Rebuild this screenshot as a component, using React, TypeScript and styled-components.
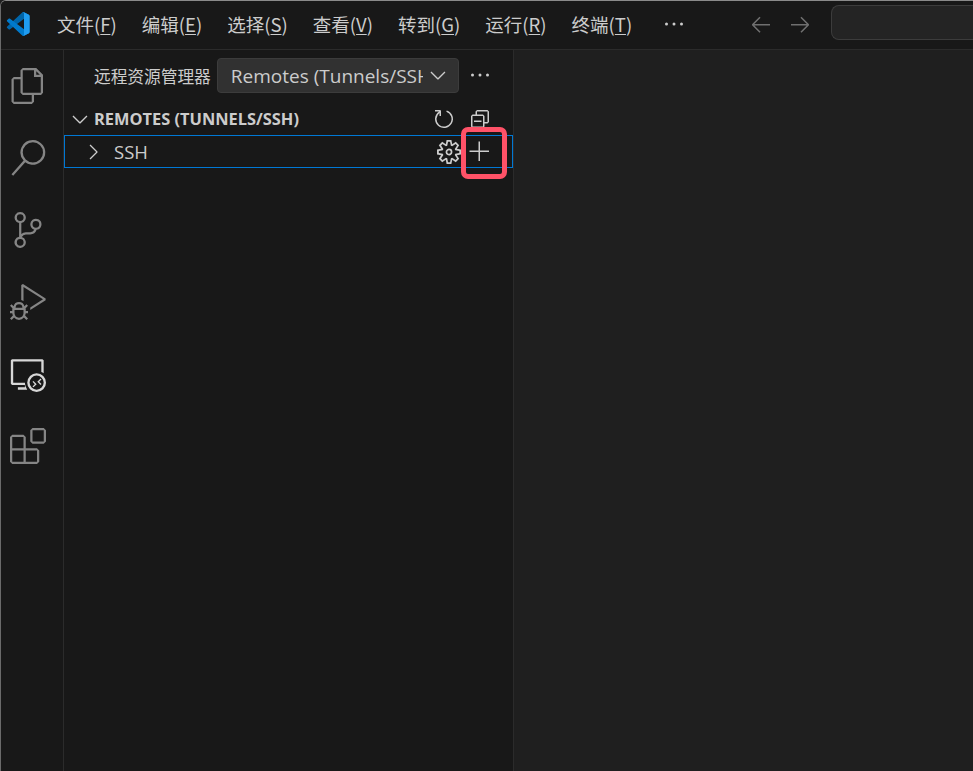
import styled, { createGlobalStyle } from "styled-components";
import {
  VscAdd,
  VscArrowLeft,
  VscArrowRight,
  VscChevronDown,
  VscChevronRight,
  VscCollapseAll,
  VscDebugAlt,
  VscEllipsis,
  VscExtensions,
  VscFiles,
  VscRefresh,
  VscRemoteExplorer,
  VscSearch,
  VscSettingsGear,
  VscSourceControl,
} from "react-icons/vsc";

const GlobalStyle = createGlobalStyle`
  html, body {
    margin: 0;
    padding: 0;
    background: #1f1f1f;
  }
  body {
    font-family: "Open Sans", "Noto Sans CJK SC", sans-serif;
  }
`;

const Window = styled.div`
  width: 973px;
  height: 771px;
  box-sizing: border-box;
  border-top: 1px solid #8a8a8a;
  border-left: 1px solid #6a6a6a;
  border-top-left-radius: 6px;
  display: flex;
  flex-direction: column;
  overflow: hidden;
  position: relative;
  background: #181818;
`;

const TitleBar = styled.div`
  height: 49px;
  flex: none;
  box-sizing: border-box;
  padding-bottom: 3px;
  display: flex;
  align-items: center;
  border-bottom: 1px solid #2b2b2b;
  background: #181818;
`;

const Logo = styled.svg`
  width: 24px;
  height: 24px;
  margin-left: 5px;
  flex: none;
`;

const Menu = styled.div`
  display: flex;
  align-items: center;
  margin-left: 27px;
  gap: 25px;
`;

const MenuItem = styled.span`
  font-size: 18.5px;
  color: #cccccc;
  white-space: nowrap;
  font-family: "Noto Sans CJK SC", sans-serif;

  u {
    text-underline-offset: 2px;
  }
`;

const MoreBtn = styled.span`
  display: flex;
  margin-left: 30px;
  color: #cccccc;
`;

const Nav = styled.div`
  display: flex;
  align-items: center;
  gap: 15px;
  margin-left: 62.5px;
  color: #6f6f6f;
`;

const SearchBox = styled.div`
  width: 160px;
  height: 35px;
  margin-left: 19.5px;
  margin-bottom: 2px;
  box-sizing: border-box;
  border: 1px solid #3c3c3c;
  border-right: none;
  border-radius: 8px 0 0 8px;
  background: #242424;
  flex: none;
`;

const Body = styled.div`
  flex: 1;
  display: flex;
  min-height: 0;
`;

const ActivityBar = styled.div`
  width: 63px;
  flex: none;
  box-sizing: border-box;
  border-right: 1px solid #2b2b2b;
  display: flex;
  flex-direction: column;
`;

const ActivitySlot = styled.div<{ $active?: boolean }>`
  height: 72px;
  box-sizing: border-box;
  padding-right: 9px;
  display: flex;
  align-items: center;
  justify-content: center;
  color: ${(p) => (p.$active ? "#d7d7d7" : "#858585")};
`;

const SideBar = styled.div`
  width: 450px;
  flex: none;
  box-sizing: border-box;
  border-right: 1px solid #2b2b2b;
  background: #181818;
`;

const SideHeader = styled.div`
  height: 50px;
  display: flex;
  align-items: center;
  padding-left: 30px;
  color: #cccccc;
`;

const SideTitle = styled.span`
  font-family: "Noto Sans CJK SC", sans-serif;
  font-size: 16.7px;
  padding-top: 2px;
  color: #cccccc;
  white-space: nowrap;
`;

const Select = styled.div`
  width: 242px;
  height: 35px;
  margin-left: 6px;
  box-sizing: border-box;
  border: 1px solid #3c3c3c;
  border-radius: 4px;
  background: #313131;
  display: flex;
  align-items: center;
  padding-left: 13px;
  color: #cccccc;
  font-size: 19px;
  flex: none;
`;

const SelectText = styled.span`
  width: 192px;
  margin-right: 3px;
  padding-top: 2px;
  overflow: hidden;
  white-space: nowrap;
  flex: none;
`;

const SideMore = styled.span`
  display: flex;
  margin-left: 9px;
`;

const SectionHeader = styled.div`
  height: 35px;
  box-sizing: border-box;
  padding: 3px 0 0 4px;
  display: flex;
  align-items: center;
  color: #cccccc;
`;

const SectionTitle = styled.span`
  font-size: 16.4px;
  font-weight: 700;
  margin: 0 0 2px 2px;
  white-space: nowrap;
  flex: 1;
`;

const HeaderIcons = styled.div`
  display: flex;
  align-items: center;
  gap: 12px;
  padding-right: 21.5px;
`;

const Row = styled.div`
  height: 33px;
  box-sizing: border-box;
  border: 1px solid #0078d4;
  display: flex;
  align-items: center;
  padding-left: 16px;
  color: #cccccc;
`;

const RowLabel = styled.span`
  font-size: 18.5px;
  margin-left: 9px;
  flex: 1;
`;

const RowIcons = styled.div`
  display: flex;
  align-items: center;
  gap: 7px;
  padding-right: 20px;
`;

const Editor = styled.div`
  flex: 1;
  background: #1f1f1f;
`;

const Highlight = styled.div`
  position: absolute;
  left: 460px;
  top: 126px;
  width: 46px;
  height: 52px;
  box-sizing: border-box;
  border: 5px solid #ff5268;
  border-radius: 7px;
`;

const menus = [
  ["文件", "F"],
  ["编辑", "E"],
  ["选择", "S"],
  ["查看", "V"],
  ["转到", "G"],
  ["运行", "R"],
  ["终端", "T"],
];

const activityIcons = [
  { key: "files", Icon: VscFiles },
  { key: "search", Icon: VscSearch },
  { key: "scm", Icon: VscSourceControl },
  { key: "debug", Icon: VscDebugAlt },
  { key: "remote", Icon: VscRemoteExplorer, active: true },
  { key: "extensions", Icon: VscExtensions },
];

export default function App() {
  return (
    <>
      <GlobalStyle />
      <Window>
        <TitleBar>
          <Logo viewBox="0 0 100 100">
            <path fill="#0065a9" d="M96 11 75 1c-2.500-1-5.500-.5-7.500 1.500L5 60c-2 2-2 5 0 7l6 5c1.500 1.500 4 1.500 6 0L96 12z" />
            <path fill="#007acc" d="M96 89 75 99c-2.500 1-5.500.5-7.500-1.500L5 40c-2-2-2-5 0-7l6-5c1.500-1.500 4-1.500 6 0L96 88z" />
            <path fill="#1f9cf0" d="M75 99c-2.500 1.200-5.500.7-7.500-1.500 2.700 2.700 7.500.8 7.500-3V5.500c0-3.800-4.800-5.700-7.500-3C69.500.3 72.500-.2 75 1l20 10c2.500 1.200 4 3.500 4 6v66c0 2.500-1.500 4.800-4 6z" />
          </Logo>
          <Menu>
            {menus.map(([name, key]) => (
              <MenuItem key={key}>
                {name}(<u>{key}</u>)
              </MenuItem>
            ))}
          </Menu>
          <MoreBtn>
            <VscEllipsis size={24} />
          </MoreBtn>
          <Nav>
            <VscArrowLeft size={24} />
            <VscArrowRight size={24} />
          </Nav>
          <SearchBox />
        </TitleBar>
        <Body>
          <ActivityBar>
            {activityIcons.map(({ key, Icon, active }) => (
              <ActivitySlot key={key} $active={active}>
                <Icon size={36} />
              </ActivitySlot>
            ))}
          </ActivityBar>
          <SideBar>
            <SideHeader>
              <SideTitle>远程资源管理器</SideTitle>
              <Select>
                <SelectText>Remotes (Tunnels/SSH)</SelectText>
                <VscChevronDown size={24} />
              </Select>
              <SideMore>
                <VscEllipsis size={24} />
              </SideMore>
            </SideHeader>
            <SectionHeader>
              <VscChevronDown size={24} />
              <SectionTitle>REMOTES (TUNNELS/SSH)</SectionTitle>
              <HeaderIcons>
                <VscRefresh size={24} />
                <VscCollapseAll size={24} />
              </HeaderIcons>
            </SectionHeader>
            <Row>
              <VscChevronRight size={24} />
              <RowLabel>SSH</RowLabel>
              <RowIcons>
                <VscSettingsGear size={24} />
                <VscAdd size={24} />
              </RowIcons>
            </Row>
          </SideBar>
          <Editor />
        </Body>
        <Highlight />
      </Window>
    </>
  );
}
